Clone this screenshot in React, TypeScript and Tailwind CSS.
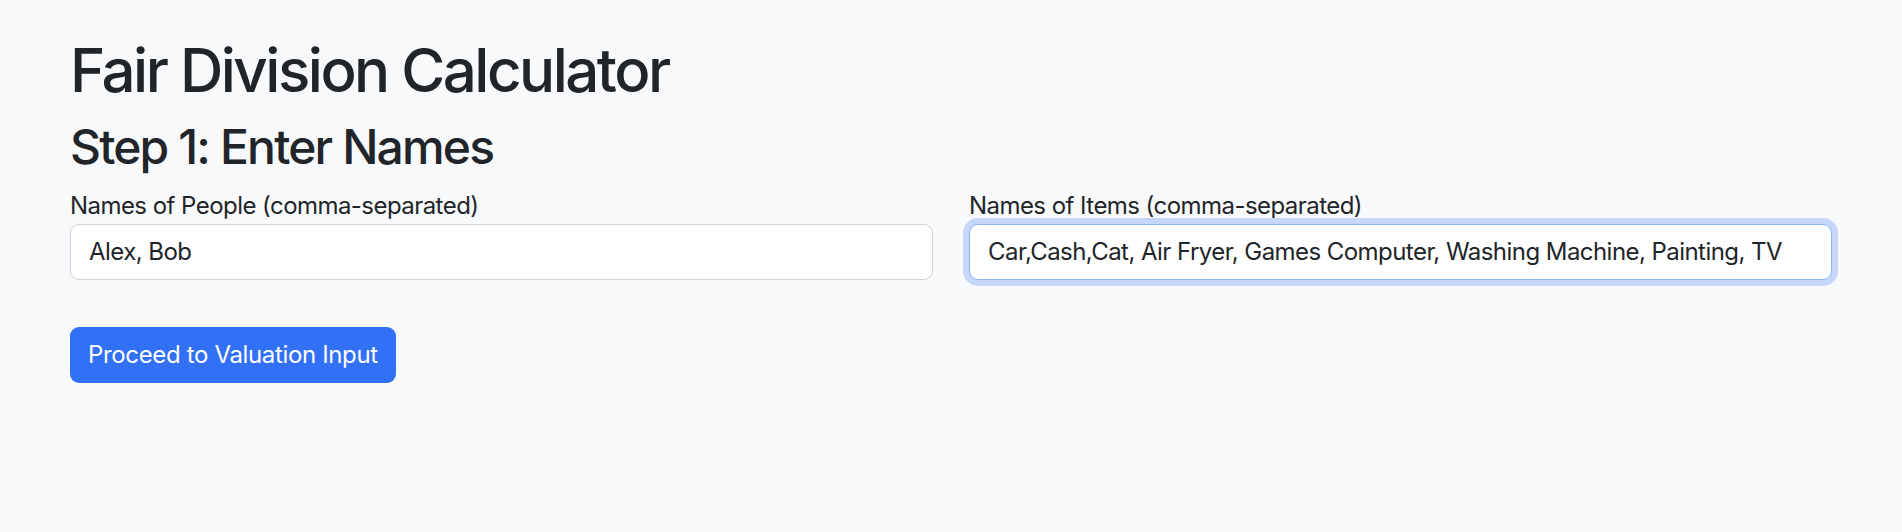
import React from "react";

const NameField: React.FC<{ label: string; value: string; focused?: boolean }> = ({
  label,
  value,
  focused,
}) => {
  return (
    <div className="flex flex-col">
      <label className="text-[24px] leading-[36px] tracking-[-0.55px] text-[#212529]">{label}</label>
      <input
        readOnly
        value={value}
        className={
          focused
            ? "w-full h-[56px] rounded-[9px] border border-[#8fb4f9] bg-white px-[18px] text-[24px] leading-[36px] tracking-[-0.55px] text-[#212529] outline-none shadow-[0_0_0_6px_#c6d6f8]"
            : "w-full h-[56px] rounded-[9px] border border-[#ced4da] bg-white px-[18px] text-[24px] leading-[36px] tracking-[-0.55px] text-[#212529] outline-none"
        }
      />
    </div>
  );
};

export default function App() {
  return (
    <div
      className="min-h-screen bg-[#f8f9fa] px-[70px] pt-[34px] text-[#212529]"
      style={{ fontFamily: "Inter, 'Noto Sans', sans-serif" }}
    >
      <h1 className="text-[60px] leading-[72px] font-medium tracking-[-2.5px] mb-[12px]">
        Fair Division Calculator
      </h1>
      <h2 className="text-[48px] leading-[57.6px] font-medium tracking-[-1.85px] mb-[12px]">
        Step 1: Enter Names
      </h2>
      <div className="grid grid-cols-2 gap-x-[36px]">
        <NameField label="Names of People (comma-separated)" value="Alex, Bob" />
        <NameField
          label="Names of Items (comma-separated)"
          value="Car,Cash,Cat, Air Fryer, Games Computer, Washing Machine, Painting, TV"
          focused
        />
      </div>
      <button className="mt-[47px] h-[56px] rounded-[9px] bg-[#3270f6] px-[18px] text-[24px] leading-[36px] tracking-[-0.35px] text-white">
        Proceed to Valuation Input
      </button>
    </div>
  );
}
